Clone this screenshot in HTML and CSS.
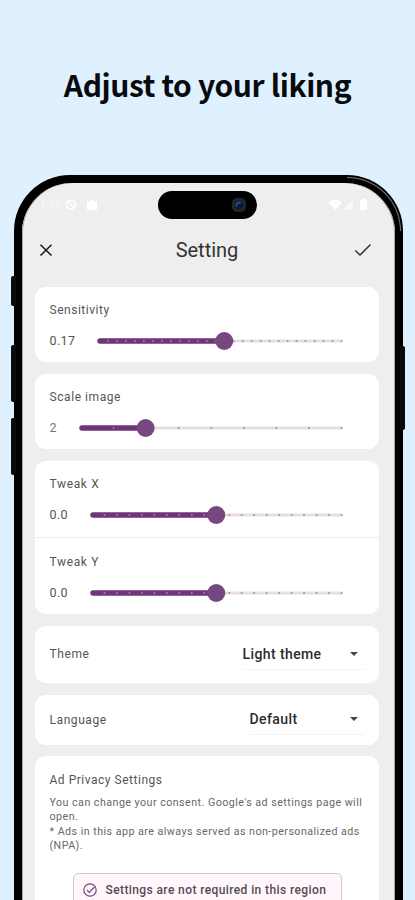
FILE: index.html
```html
<!DOCTYPE html>
<html lang="en">
<head>
	<meta charset="UTF-8">
	<title>Setting</title>
	<link rel="stylesheet" href="styles.css">
</head>
<body>
	<h1 class="headline">Adjust to your liking</h1>
	<div class="phone">
		<i class="key key-mute"></i>
		<i class="key key-up"></i>
		<i class="key key-down"></i>
		<i class="key key-power"></i>
		<i class="glint"></i>
		<div class="screen">
			<div class="status">
				<span class="clock">1:12</span>
				<svg class="status-left" width="36" height="14" viewBox="0 0 36 14">
					<circle cx="6" cy="6.500" r="4.5" fill="none" stroke="#fff" stroke-width="1.5"/>
					<path d="M3 3.500l6 6" stroke="#fff" stroke-width="1.5"/>
					<path d="M22 4h2.500a2.500 2.500 0 0 1 5 0H32v8H22z" fill="#fff"/>
				</svg>
				<div class="island"><svg width="14" height="14"><rect width="14" height="14" rx="5" fill="#22262a"/><circle cx="7" cy="7" r="4.500" fill="#0b1c36"/><path d="M4.500 8.500A3 3 0 0 1 9 5" fill="none" stroke="#2459a0" stroke-width="1.500"/></svg></div>
				<svg class="status-right" width="42" height="14" viewBox="0 0 42 14">
					<path d="M0 4Q7-1 14 4L7 12z" fill="#fff"/>
					<path d="M15 12L25 2v10z" fill="#f8f8f8"/>
					<path d="M32 2.500h2V1h3v1.500h2V12h-7z" fill="#fff"/>
				</svg>
			</div>
			<div class="bar">
				<svg width="14" height="14" viewBox="0 0 14 14"><path d="M1.500 1.700l11 10.800M12.500 1.700l-11 10.800" stroke="#161616" stroke-width="1.500"/></svg>
				<h2 class="title">Setting</h2>
				<svg width="18" height="14" viewBox="0 0 18 14"><path d="M1.300 7.500l4.700 4.500L16.500 1.500" fill="none" stroke="#333" stroke-width="1.500"/></svg>
			</div>
			<ul class="list">
				<li class="card">
					<div class="item">
						<p class="label">Sensitivity</p>
						<div class="row"><span>0.17</span><svg class="slider" data-start="99" data-steps="27" data-value="14"></svg></div>
					</div>
				</li>
				<li class="card">
					<div class="item">
						<p class="label label-scale">Scale image</p>
						<div class="row"><span class="light">2</span><svg class="slider" data-start="81" data-steps="8" data-value="2"></svg></div>
					</div>
				</li>
				<li class="card">
					<div class="item item-tall">
						<p class="label label-tweak">Tweak X</p>
						<div class="row"><span>0.0</span><svg class="slider" data-start="92" data-steps="20" data-value="10"></svg></div>
					</div>
					<div class="item item-last">
						<p class="label label-tweak">Tweak Y</p>
						<div class="row"><span>0.0</span><svg class="slider" data-start="92" data-steps="20" data-value="10"></svg></div>
					</div>
				</li>
				<li class="card choice choice-theme">
					<span class="label label-theme">Theme</span>
					<div class="select select-theme"><span>Light theme</span><i class="arrow"></i></div>
				</li>
				<li class="card choice choice-lang">
					<span class="label label-scale">Language</span>
					<div class="select select-lang"><span>Default</span><i class="arrow"></i></div>
				</li>
				<li class="card privacy">
					<p class="label">Ad Privacy Settings</p>
					<p class="note">You can change your consent. Google's ad settings page will<br>open.<br>* Ads in this app are always served as non-personalized ads<br>(NPA).</p>
					<div class="chip">
						<svg width="14" height="14" viewBox="0 0 14 14" fill="none" stroke="#75487b" stroke-width="1.200"><circle cx="7" cy="7" r="6.200"/><path d="M4 7l2.300 2.300L11.500 4"/></svg>
						<span>Settings are not required in this region</span>
					</div>
				</li>
			</ul>
		</div>
	</div>
	<script src="slider.js"></script>
</body>
</html>
```
FILE: styles.css
```css
*{ margin: 0; padding: 0; box-sizing: border-box; }
body{ width: 415px; height: 900px; overflow: hidden; background: #dff1fe; font-family: Roboto, "Liberation Sans", sans-serif; color: #555; }
li{ list-style: none; }
svg{ display: block; flex: none; }
.headline{ height: 175px; padding-top: 59px; font: 700 30px/50px "Noto Sans CJK JP", "Noto Sans", sans-serif; letter-spacing: -.4px; text-align: center; white-space: nowrap; color: #080b0e; }

.phone{ position: relative; width: 389px; height: 725px; margin-left: 14px; padding: 8px 8px 0; background: #000; border-radius: 56px 56px 0 0; }
.key{ position: absolute; left: -3px; width: 5px; background: #080a0c; border-radius: 2px 0 0 2px; }
.key-mute{ top: 101px; height: 30px; }
.key-up{ top: 170px; height: 57px; }
.key-down{ top: 243px; height: 57px; }
.key-power{ left: auto; right: -2px; top: 171px; height: 84px; border-radius: 0 2px 2px 0; }
.glint{ position: absolute; right: 2px; top: 2px; width: 54px; height: 54px; border: solid #777; border-width: 1.5px 1.5px 0 0; border-radius: 0 54px 0 0; }
.screen{ height: 100%; overflow: hidden; background: #eee; border-radius: 50px 50px 0 0; box-shadow: inset -1px 0 #a0aaa7, inset 1px 0 #aaa; }

.status{ display: flex; height: 44px; padding: 8px 25px 0 18px; }
.clock{ width: 22px; padding-top: 6px; font-size: 11px; line-height: 14px; color: #f9f9f9; }
.status-left{ margin: 7px 0 0 3px; }
.island{ display: flex; align-items: center; justify-content: flex-end; width: 99px; height: 28px; margin-left: 57px; padding-right: 11px; background: #000; border-radius: 14px; }
.status-right{ margin: 7px 0 0 71px; }
.bar{ display: flex; align-items: center; justify-content: space-between; height: 46px; padding: 0 23px 0 17px; }
.title{ padding-left: 7px; font-size: 20px; font-weight: 400; color: #333; }

.list{ display: flex; flex-direction: column; gap: 12px; margin: 14px 16px 0 13px; }
.card{ background: #fff; border-radius: 11px; }
.item{ height: 75px; padding: 15px 0 0 14.5px; }
.item-tall{ height: 77px; border-bottom: 1px solid #ececec; }
.item-last{ height: 76px; padding-top: 16px; }
.label{ font-size: 12px; line-height: 16px; letter-spacing: .52px; }
.label-scale{ letter-spacing: .57px; }
.label-tweak{ letter-spacing: .65px; }
.label-theme{ letter-spacing: .6px; }
.row{ display: flex; align-items: center; justify-content: space-between; height: 20px; margin-top: 12.6px; padding-right: 34px; font-size: 12.5px; letter-spacing: .4px; }
.light{ color: #777; }

.choice{ display: flex; align-items: center; justify-content: space-between; padding: 0 15px 0 14.5px; }
.choice-theme{ height: 57px; margin-top: -.4px; }
.choice-lang{ height: 50.4px; }
.select{ display: flex; align-items: center; justify-content: space-between; height: 31px; padding-right: 6px; border-bottom: 1px solid #f3f3f3; font-size: 14px; font-weight: 500; color: #2c2c2c; }
.select-theme{ width: 121.5px; letter-spacing: .4px; }
.select-lang{ width: 114.5px; letter-spacing: .4px; }
.arrow{ border: 4px solid transparent; border-top-color: #444; border-bottom: 0; }

.privacy{ height: 165px; margin-top: -1.5px; padding: 16px 0 0 14.5px; }
.note{ margin-top: 8.5px; font-size: 10.7px; line-height: 14.4px; letter-spacing: .46px; white-space: nowrap; color: #686868; }
.chip{ display: flex; align-items: center; gap: 9px; width: 269px; height: 34px; margin: 19.5px 0 0 23px; padding-left: 9px; border: 1px solid #d0c8ce; border-radius: 5px; background: #fff7fc; font-size: 12px; font-weight: 500; letter-spacing: .4px; color: #544a54; white-space: nowrap; }
```
FILE: slider.js
```javascript
var sliders = document.querySelectorAll('.slider');
var end = 341.5;

for(var i=0;i<sliders.length;i++){
	var s = sliders[i];
	var start = Number(s.dataset.start);
	var steps = Number(s.dataset.steps);
	var value = Number(s.dataset.value);
	var len = end - start;
	var now = 1.5 + len * value / steps;
	var html = '<path d="M2 10H' + (len + 1) + '" stroke="#e8dde4" stroke-width="3" stroke-linecap="round"/>';
	html += '<path d="M2 10H' + now + '" stroke="#70347a" stroke-width="5.5" stroke-linecap="round"/>';
	for(var n=1;n<=steps;n++){
		html += '<circle cx="' + (1 + len * n / steps) + '" cy="10" r="1" fill="' + (n < value ? '#a77dac' : '#a391a0') + '"/>';
	}
	html += '<circle cx="' + (now - 1) + '" cy="10" r="9" fill="#774780"/>';
	s.setAttribute('width', len + 5);
	s.setAttribute('height', 20);
	s.style.overflow = 'visible';
	s.innerHTML = html;
}
```
